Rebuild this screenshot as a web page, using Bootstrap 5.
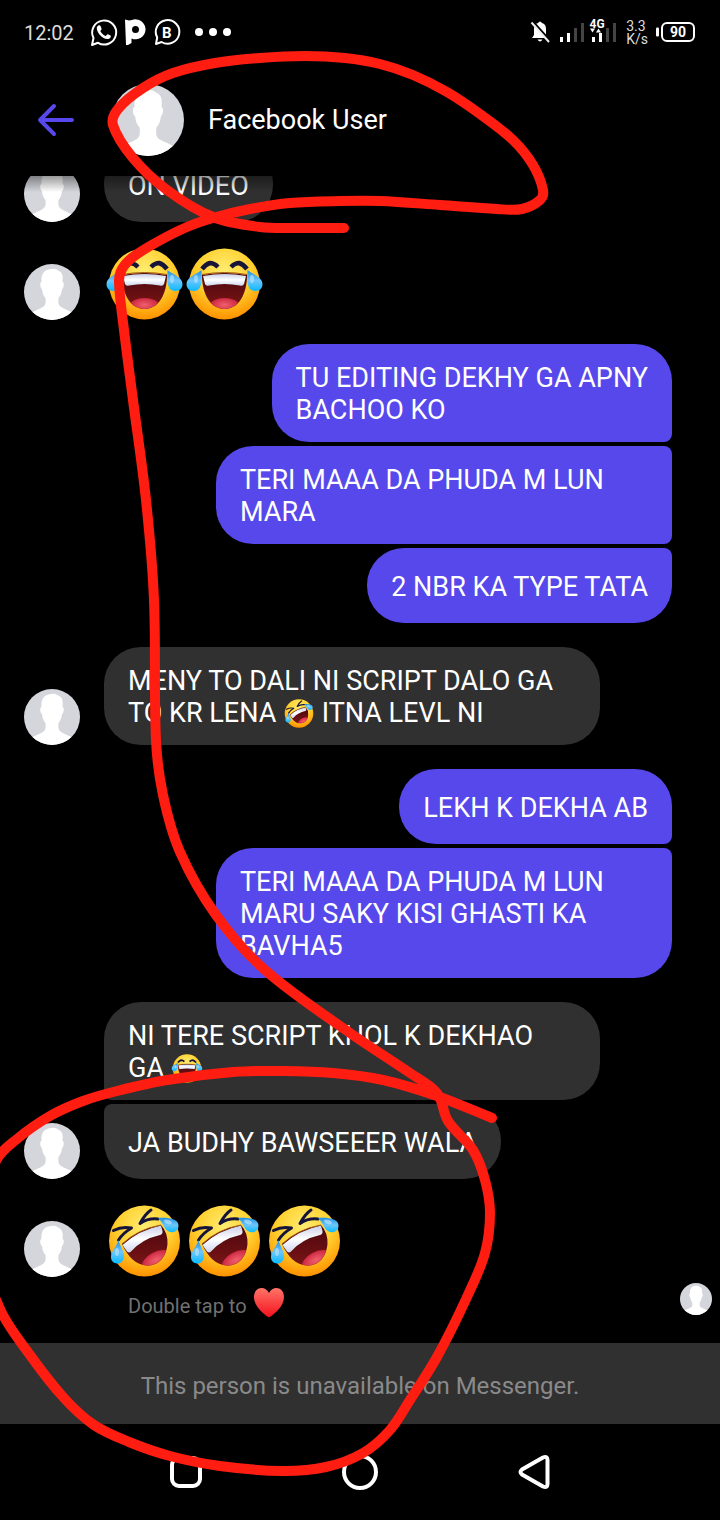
<!DOCTYPE html>
<html lang="en">
<head>
<meta charset="utf-8">
<meta name="viewport" content="width=device-width, initial-scale=1">
<title>Facebook User</title>
<link rel="stylesheet" href="https://cdn.jsdelivr.net/npm/bootstrap@5.3.0/dist/css/bootstrap.min.css">
<style>
  body { background: #000; color: #fff; font-family: Roboto, "Noto Sans", sans-serif; font-size: 27px; line-height: 32px; }
  svg { display: block; flex: none; }
  .status-bar { height: 64px; padding: 0 25px 0 24px; font-size: 20px; line-height: 24px; color: #ddd; }
  .status-left { gap: 15px; padding-top: 2px; }
  .net-speed { font-size: 14px; line-height: 13px; padding-top: 2px; }
  .chat-header { height: 112px; }
  .back-btn { width: 112px; border: 0; background: none; padding: 0 0 0 36px; }
  .face-lg { width: 72px; height: 72px; }
  .face-md { width: 56px; height: 56px; }
  .face-sm { width: 32px; height: 32px; }
  .thread { min-height: 0; overflow: hidden; padding: 0 48px 0 24px; }
  .thread::before { content: ""; position: absolute; inset: 0 0 auto 0; height: 16px; background: linear-gradient(#0006, #0000); z-index: 1; }
  .turn { flex: none; margin-top: 24px; gap: 24px; }
  .turn-emoji { margin-top: 26px; }
  .stack { gap: 4px; }
  .bubble { min-height: 75px; max-width: 496px; padding: 18px 24px 16px; border-radius: 37px; background: #303030; }
  .mine .bubble { max-width: 456px; background: #5648eb; }
  .mine .joined-below { border-bottom-right-radius: 8px; }
  .mine .joined-above { border-top-right-radius: 8px; }
  .theirs .joined-below { border-bottom-left-radius: 8px; }
  .theirs .joined-above { border-top-left-radius: 8px; }
  .theirs .wide { width: 496px; }
  .emoji-lg { width: 80px; height: 72px; }
  .emoji-text { display: inline-block; width: 32px; height: 29px; vertical-align: -6px; }
  .hint { flex: none; padding: 6px 8px 25px 128px; margin: 0 -48px 0 -24px; font-size: 20px; line-height: 24px; color: #717171; }
  .hint-label { height: 35px; gap: 6px; }
  .notice { height: 81px; background: #303030; color: #8a8a8a; font-size: 24px; }
  .system-nav { height: 96px; }
  .system-keys { max-width: 522px; }
  .system-keys button { border: 0; background: none; padding: 0; }
  .ink { z-index: 5; pointer-events: none; }
</style>
</head>
<body>
<svg width="0" height="0" class="position-absolute" aria-hidden="true">
  <defs>
    <radialGradient id="skin" cx=".5" cy=".3" r=".7"><stop offset="0" stop-color="#ffec70"/><stop offset=".55" stop-color="#ffd02e"/><stop offset="1" stop-color="#ff9100"/></radialGradient>
    <linearGradient id="tear" x2="0" y2="1"><stop offset="0" stop-color="#1d8fe0"/><stop offset=".5" stop-color="#6cc6fb"/><stop offset="1" stop-color="#0bbaff"/></linearGradient>
    <linearGradient id="throat" x2="0" y2="1"><stop offset="0" stop-color="#45040c"/><stop offset="1" stop-color="#7e1717"/></linearGradient>
    <linearGradient id="enamel" x2="0" y2="1"><stop offset="0" stop-color="#c9cfe6"/><stop offset=".5" stop-color="#fff"/><stop offset="1" stop-color="#ccd5ee"/></linearGradient>
    <radialGradient id="tongue"><stop offset="0" stop-color="#f0606e"/><stop offset="1" stop-color="#cc2740"/></radialGradient>
    <linearGradient id="heart" x2="0" y2="1"><stop offset="0" stop-color="#ff7468"/><stop offset="1" stop-color="#f4101c"/></linearGradient>
    <clipPath id="joy-mouth"><path d="M18 27Q40.500 23 63 27C63 47 54 61 40.500 61S18 47 18 27Z"/></clipPath>
    <clipPath id="rofl-mouth"><path d="M18 39Q34 24 57 20Q64 28 63.500 39C62 55 52 61 43 60.500C32 60 24 52 18 39Z"/></clipPath>
    <clipPath id="round"><circle cx="28" cy="28" r="28"/></clipPath>
  </defs>
  <symbol id="person" viewBox="0 0 56 56">
    <g clip-path="url(#round)">
      <path fill="#d5d6dc" d="M0 0h56v56H0z"/>
      <path fill="#fff" d="M28 5C31 4 33 6 35 7C39 9 39 13 38.500 18C40.500 18 40 24 38 25C37.500 30 36 32 34.500 34C34 39 34.500 42 38 43.500C43 46 46 47 52 51V56H4V51C10 47 13 46 18 43.500C21.500 42 22 39 21.500 34C20 32 18.500 30 18 25C16 24 15.500 18 17.500 18C17 10 20 5 28 5Z"/>
    </g>
  </symbol>
  <symbol id="joy" viewBox="0 0 80 72">
    <circle cx="40.500" cy="36" r="35.500" fill="url(#skin)"/>
    <g fill="none" stroke="#17143a" stroke-width="4.500" stroke-linejoin="round"><path d="M18 21Q22 16 26 15Q30 15 34 19"/><path d="M63 21Q59 16 55 15Q51 15 47 19"/></g>
    <g clip-path="url(#joy-mouth)"><path fill="url(#throat)" d="M17 22h48v40H17z"/><path fill="url(#enamel)" d="M19 28Q40.500 24 62 28L60 36Q59 38.500 56 37.500Q40.500 34.500 25 37.500Q22 38.500 21 36Z"/><ellipse cx="40.500" cy="57" rx="14" ry="7" fill="url(#tongue)"/></g>
    <path fill="none" stroke="#a85b12" d="M18 26.500Q40.500 22.500 63 26.500"/>
    <g fill="url(#tear)"><path d="M17.500 22C18 34 18 43 9.500 43C5 43 2.500 40 2.500 36C2.500 29 13 26 17.500 22Z"/><path d="M63.500 22C63 34 63 43 71.500 43C76 43 78.500 40 78.500 36C78.500 29 68 26 63.500 22Z"/></g>
    <g fill="#b6e2ff" opacity=".7"><ellipse cx="12" cy="31" rx="2" ry="4"/><ellipse cx="68" cy="31" rx="2" ry="4"/></g>
  </symbol>
  <symbol id="rofl" viewBox="0 0 80 72">
    <circle cx="40.500" cy="36" r="35.500" fill="url(#skin)"/>
    <g fill="none" stroke="#17143a" stroke-width="3" stroke-linejoin="round" stroke-linecap="round"><path d="M9.500 25.500Q18 21 27.500 23Q19 28 14.500 35"/><path d="M47 5Q41 9 36 18.500Q44 13 54 14"/></g>
    <g clip-path="url(#rofl-mouth)"><path fill="url(#throat)" d="M16 16h50v48H16z"/><path fill="url(#enamel)" d="M18.500 40Q35 25 57 20.500L58.500 26Q59 29 56 30Q38 34 27 46.500Q25 48.500 23 46.500Z"/><ellipse cx="52" cy="55" rx="15" ry="8" transform="rotate(-28 52 55)" fill="url(#tongue)"/></g>
    <path fill="none" stroke="#a85b12" d="M18 39Q34 24 57 20"/>
    <g fill="url(#tear)"><path d="M54 13C62 12 74.500 13 74.500 20.500C74.500 25 71 28 66.500 27C60 26 59 17 54 13Z"/><path d="M14.500 35C16 42 20.500 46 20 52C19.500 56 17 58.500 13.500 58.500C9 58.500 6.500 55 7 51C7.500 46 13 41 14.500 35Z"/></g>
    <g fill="#b6e2ff" opacity=".7"><ellipse cx="64" cy="17" rx="4" ry="2" transform="rotate(20 64 17)"/><ellipse cx="13" cy="47" rx="2" ry="4"/></g>
  </symbol>
</svg>

<div class="page position-relative d-flex flex-column vh-100 overflow-hidden">
  <div class="status-bar flex-shrink-0 d-flex align-items-center justify-content-between">
    <div class="status-left d-flex align-items-center">
      <span>12:02</span>
      <svg width="144" height="30" viewBox="89 18 144 30" role="img" aria-label="Notifications">
        <g fill="none" stroke="#fff" stroke-width="2" stroke-linejoin="round"><path d="M92 45L93.500 38A12 12 0 1 1 98 42.800Z"/><path d="M156 44L157.200 37.500A11.800 11.800 0 1 1 161.500 42Z"/></g>
        <path fill="#fff" d="M97 27C98 25 100 25 100.500 26L101.500 28.500C102 30 100 30.500 100.500 31.500C102 34 103.500 35 105.500 36C106.500 36 107 34 108 34.300L110.500 35.500C111.500 36.500 110 39 108 39C102 39.500 95.500 31 97 27Z"/>
        <path fill="#fff" fill-rule="evenodd" d="M125 19.500L129 20.500L132 20A10 10 0 1 1 131.500 38.500V43L128 45H126ZM135.500 26A3.500 3.500 0 1 0 135.500 33A3.500 3.500 0 1 0 135.500 26Z"/>
        <text x="162" y="37.500" fill="#fff" font-size="15" font-weight="700">B</text>
        <g fill="#fff"><circle cx="199" cy="32" r="4"/><circle cx="213" cy="32" r="4"/><circle cx="227" cy="32" r="4"/></g>
      </svg>
    </div>
    <div class="d-flex align-items-center">
      <svg width="98" height="30" viewBox="528 17 98 30" role="img" aria-label="Muted, 4G signal">
        <path fill="#fff" d="M532 38L534 35V29Q534 24 538 23Q540 20 542 23Q546 24 546 29V35L548 38ZM537.500 39.500H542.500Q540 43.500 537.500 39.500Z"/>
        <path stroke="#000" stroke-width="2" d="M532.500 21L550 40.500"/><path stroke="#eee" stroke-width="2" d="M531.500 22.500L549 42"/>
        <g fill="#fff"><path d="M560 37h3v5h-3zM567 33h3v9h-3zM592 37h3v5h-3zM599 33h3v9h-3zM590 28.500h5l-2.500 4zM596 32.500h5l-2.500-4z"/></g>
        <g fill="#444"><path d="M574 28h3v14h-3zM581 23h3v19h-3zM606 28h3v14h-3zM613 23h3v19h-3z"/></g>
        <text x="589.500" y="27.500" fill="#fff" font-size="12" font-weight="700">4G</text>
      </svg>
      <div class="net-speed">3.3<br>K/s</div>
      <svg class="ms-2" width="39" height="20" viewBox="656 22 39 20" role="img" aria-label="Battery 90">
        <rect x="656" y="27.500" width="3" height="9" rx="1" fill="#fff"/><rect x="662" y="23" width="32" height="18" rx="5" fill="none" stroke="#fff" stroke-width="2"/>
        <text x="678" y="37" fill="#fff" font-size="14" font-weight="700" text-anchor="middle">90</text>
      </svg>
    </div>
  </div>

  <header class="chat-header flex-shrink-0 d-flex align-items-center">
    <button class="back-btn" type="button" aria-label="Back">
      <svg width="40" height="36" viewBox="0 0 40 36" fill="none" stroke="#5648eb" stroke-width="4" stroke-linecap="round" stroke-linejoin="round"><path d="M18 4L4 18L18 32M4 18H36"/></svg>
    </button>
    <svg class="face-lg" role="img" aria-label="Profile picture"><use href="#person"/></svg>
    <span class="ms-4">Facebook User</span>
  </header>

  <main class="thread position-relative flex-grow-1 d-flex flex-column justify-content-end">
    <div class="turn theirs d-flex align-items-end">
      <svg class="face-md"><use href="#person"/></svg>
      <div class="bubble d-flex align-items-center">ON VIDEO</div>
    </div>
    <div class="turn turn-emoji theirs d-flex align-items-end">
      <svg class="face-md"><use href="#person"/></svg>
      <div class="d-flex" role="img" aria-label="Two faces with tears of joy"><svg class="emoji-lg"><use href="#joy"/></svg><svg class="emoji-lg"><use href="#joy"/></svg></div>
    </div>
    <div class="turn mine stack d-flex flex-column align-items-end">
      <div class="bubble joined-below">TU EDITING DEKHY GA APNY<br>BACHOO KO</div>
      <div class="bubble joined-above joined-below">TERI MAAA DA PHUDA M LUN MARA</div>
      <div class="bubble joined-above d-flex align-items-center">2 NBR KA TYPE TATA</div>
    </div>
    <div class="turn theirs d-flex align-items-end">
      <svg class="face-md"><use href="#person"/></svg>
      <div class="bubble wide">MENY TO DALI NI SCRIPT DALO GA<br>TO KR LENA <svg class="emoji-text" viewBox="4 0 73 72" role="img" aria-label="Rolling on the floor laughing"><use href="#rofl" width="80" height="72"/></svg> ITNA LEVL NI</div>
    </div>
    <div class="turn mine stack d-flex flex-column align-items-end">
      <div class="bubble joined-below d-flex align-items-center">LEKH K DEKHA AB</div>
      <div class="bubble joined-above">TERI MAAA DA PHUDA M LUN MARU SAKY KISI GHASTI KA BAVHA5</div>
    </div>
    <div class="turn theirs d-flex align-items-end">
      <svg class="face-md"><use href="#person"/></svg>
      <div class="stack d-flex flex-column align-items-start">
        <div class="bubble wide joined-below">NI TERE SCRIPT KHOL K DEKHAO<br>GA <svg class="emoji-text" viewBox="4 0 73 72" role="img" aria-label="Tears of joy"><use href="#joy" width="80" height="72"/></svg></div>
        <div class="bubble joined-above d-flex align-items-center">JA BUDHY BAWSEEER WALA</div>
      </div>
    </div>
    <div class="turn turn-emoji theirs d-flex align-items-end">
      <svg class="face-md"><use href="#person"/></svg>
      <div class="d-flex" role="img" aria-label="Three faces rolling on the floor laughing"><svg class="emoji-lg"><use href="#rofl"/></svg><svg class="emoji-lg"><use href="#rofl"/></svg><svg class="emoji-lg"><use href="#rofl"/></svg></div>
    </div>
    <div class="hint d-flex align-items-start justify-content-between">
      <div class="hint-label d-flex align-items-end">
        <span>Double tap to</span>
        <svg width="32" height="30" viewBox="0 0 32 30" role="img" aria-label="heart"><path fill="url(#heart)" d="M16 29.500C10 26 1 18 1 9C1-1 12-3 16 5C20-3 31-1 31 9C31 18 22 26 16 29.500Z"/></svg>
      </div>
      <svg class="face-sm" role="img" aria-label="Seen"><use href="#person"/></svg>
    </div>
  </main>

  <footer class="flex-shrink-0">
    <div class="notice d-flex align-items-center justify-content-center px-3 pt-1">This person is unavailable on Messenger.</div>
    <nav class="system-nav d-flex align-items-center justify-content-center" aria-label="System">
      <div class="system-keys d-flex w-100">
        <button type="button" class="flex-fill d-flex justify-content-center" aria-label="Recent apps"><svg width="40" height="40" fill="none" stroke="#fff" stroke-width="4"><rect x="6" y="6" width="28" height="28" rx="7"/></svg></button>
        <button type="button" class="flex-fill d-flex justify-content-center" aria-label="Home"><svg width="40" height="40" fill="none" stroke="#fff" stroke-width="4"><circle cx="20" cy="20" r="16"/></svg></button>
        <button type="button" class="flex-fill d-flex justify-content-center" aria-label="Back"><svg width="40" height="40" fill="none" stroke="#fff" stroke-width="4" stroke-linejoin="round"><path d="M8 17.500L29 5.500Q33.500 3.500 33.500 8V32Q33.500 36.500 29 34.500L8 22.500Q5 20 8 17.500Z"/></svg></button>
      </div>
    </nav>
  </footer>

  <svg class="ink position-absolute top-0 start-0 w-100 h-100" viewBox="0 0 720 1520" preserveAspectRatio="none" fill="none" stroke="#ff1c10" stroke-width="10" stroke-linecap="round" stroke-linejoin="round" aria-hidden="true"><path id="ink-line"/></svg>
</div>

<script src="https://cdn.jsdelivr.net/npm/bootstrap@5.3.0/dist/js/bootstrap.bundle.min.js"></script>
<script>
  // Freehand marker stroke: a smooth curve through the sampled pen positions.
  const pen = [[344,228],[300,228],[260,227],[213,217],[167,190],[133,158],[113,125],[118,109],[143,88],[173,73],[215,63],[260,58],[305,56],[345,58],[380,64],[413,75],[447,92],[480,114],[513,140],[533,165],[543,190],[540,200],[522,209],[497,209],[440,205],[380,201],[340,201],[290,203],[250,209],[213,218],[187,227],[157,242],[133,257],[122,269],[119,282],[124,330],[133,400],[146,500],[154,600],[156,740],[163,795],[180,852],[216,915],[265,970],[350,1033],[410,1073],[437,1093],[448,1121],[473,1150],[485,1180],[490,1213],[485,1253],[467,1297],[437,1357],[410,1400],[390,1430],[363,1453],[326,1467],[282,1471],[220,1466],[170,1456],[129,1442],[94,1425],[64,1398],[30,1355],[0,1309],[-24,1230],[-4,1161],[17,1139],[50,1116],[83,1101],[117,1091],[167,1080],[233,1072],[283,1071],[333,1073],[383,1080],[437,1096],[492,1118]];
  let d = `M${pen[0]}`;
  for (let i = 0; i < pen.length - 1; i++) {
    const a = pen[Math.max(i - 1, 0)], b = pen[i], c = pen[i + 1], e = pen[Math.min(i + 2, pen.length - 1)];
    const len = Math.hypot(c[0] - b[0], c[1] - b[1]) / 3;
    const t1 = Math.hypot(c[0] - a[0], c[1] - a[1]), t2 = Math.hypot(e[0] - b[0], e[1] - b[1]);
    d += `C${b[0] + (c[0] - a[0]) / t1 * len} ${b[1] + (c[1] - a[1]) / t1 * len} ${c[0] - (e[0] - b[0]) / t2 * len} ${c[1] - (e[1] - b[1]) / t2 * len} ${c}`;
  }
  document.getElementById('ink-line').setAttribute('d', d);
</script>
</body>
</html>
